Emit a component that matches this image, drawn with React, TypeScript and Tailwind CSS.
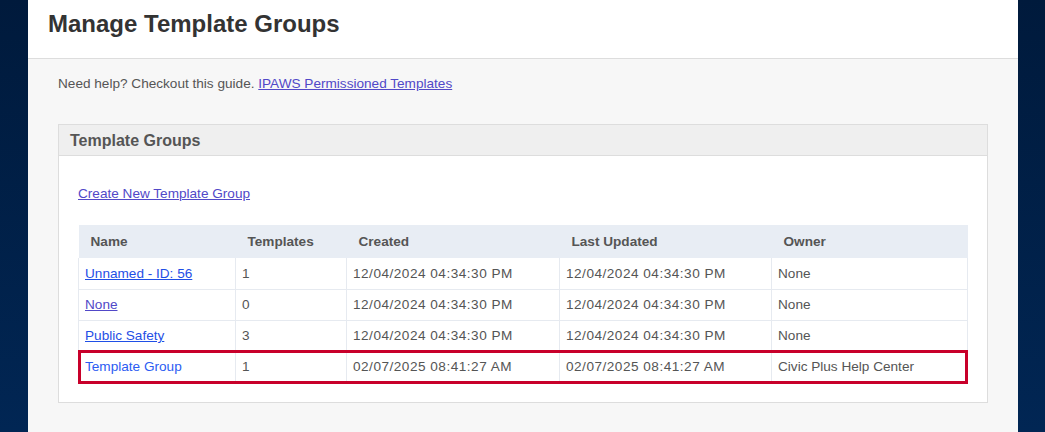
const ROWS: { name: string; count: string; created: string; updated: string; owner: string; link: string }[] = [
  {
    name: "Unnamed - ID: 56",
    count: "1",
    created: "12/04/2024 04:34:30 PM",
    updated: "12/04/2024 04:34:30 PM",
    owner: "None",
    link: "text-[#1f4fe6] underline",
  },
  {
    name: "None",
    count: "0",
    created: "12/04/2024 04:34:30 PM",
    updated: "12/04/2024 04:34:30 PM",
    owner: "None",
    link: "text-[#5148c8] underline",
  },
  {
    name: "Public Safety",
    count: "3",
    created: "12/04/2024 04:34:30 PM",
    updated: "12/04/2024 04:34:30 PM",
    owner: "None",
    link: "text-[#1f4fe6] underline",
  },
  {
    name: "Template Group",
    count: "1",
    created: "02/07/2025 08:41:27 AM",
    updated: "02/07/2025 08:41:27 AM",
    owner: "Civic Plus Help Center",
    link: "text-[#2b5cf2]",
  },
];

export default function App() {
  return (
    <div className="flex h-[432px] w-[1045px] overflow-hidden bg-gradient-to-b from-[#001a3c] to-[#012654] pl-[28px] pr-[27px] font-['Liberation_Sans',Arial,sans-serif] text-[13.6px] text-[#555]">
      <main className="flex flex-1 flex-col bg-[#f7f7f7]">
        <header className="h-[59px] border-b border-[#dddddd] bg-white pl-[20px] pt-[10px]">
          <h1 className="text-[24px] font-bold leading-[28px] text-[#333]">Manage Template Groups</h1>
        </header>

        <div className="px-[30px] pt-[16px]">
          <p className="leading-[18px]">
            Need help? Checkout this guide.{" "}
            <a href="#" className="text-[#5148c8] underline">
              IPAWS Permissioned Templates
            </a>
          </p>

          <section className="mt-[31px] border border-[#dddddd] bg-white">
            <div className="h-[31px] border-b border-[#dddddd] bg-[#efefef] px-[11px] pt-[6px]">
              <h2 className="text-[16px] font-bold leading-[19px] text-[#555]">Template Groups</h2>
            </div>

            <div className="px-[19px] pb-[19px] pt-[29px]">
              <a href="#" className="block leading-[18px] text-[#5148c8] underline">
                Create New Template Group
              </a>

              {/* tabla con el resaltado rojo encima de la última fila */}
              <div className="relative mt-[22px]">
                <table className="w-full border-collapse text-left">
                  <thead>
                    <tr className="h-[33px] bg-[#e8edf4] text-[13.6px] font-bold text-[#555]">
                      <th className="w-[157px] px-[12px] pt-[1px] font-bold">Name</th>
                      <th className="w-[111px] px-[12px] pt-[1px] font-bold">Templates</th>
                      <th className="w-[213px] px-[12px] pt-[1px] font-bold">Created</th>
                      <th className="w-[212px] px-[12px] pt-[1px] font-bold">Last Updated</th>
                      <th className="px-[12px] pt-[1px] font-bold">Owner</th>
                    </tr>
                  </thead>
                  <tbody>
                    {ROWS.map((r) => (
                      <tr key={r.name} className="h-[31px] border-b border-[#e6eaf0]">
                        <td className="border-x border-[#e6eaf0] px-[6px] pt-[2px]">
                          <a href="#" className={r.link}>
                            {r.name}
                          </a>
                        </td>
                        <td className="border-x border-[#e6eaf0] px-[6px] pt-[2px]">{r.count}</td>
                        <td className="border-x border-[#e6eaf0] px-[6px] pt-[2px] tracking-[0.5px]">{r.created}</td>
                        <td className="border-x border-[#e6eaf0] px-[6px] pt-[2px] tracking-[0.5px]">{r.updated}</td>
                        <td className="border-x border-[#e6eaf0] px-[6px] pt-[2px]">{r.owner}</td>
                      </tr>
                    ))}
                  </tbody>
                </table>
                <div className="pointer-events-none absolute bottom-[-1px] left-0 right-0 h-[34px] border-[3px] border-[#c8002a]" />
              </div>
            </div>
          </section>
        </div>
      </main>
    </div>
  );
}
